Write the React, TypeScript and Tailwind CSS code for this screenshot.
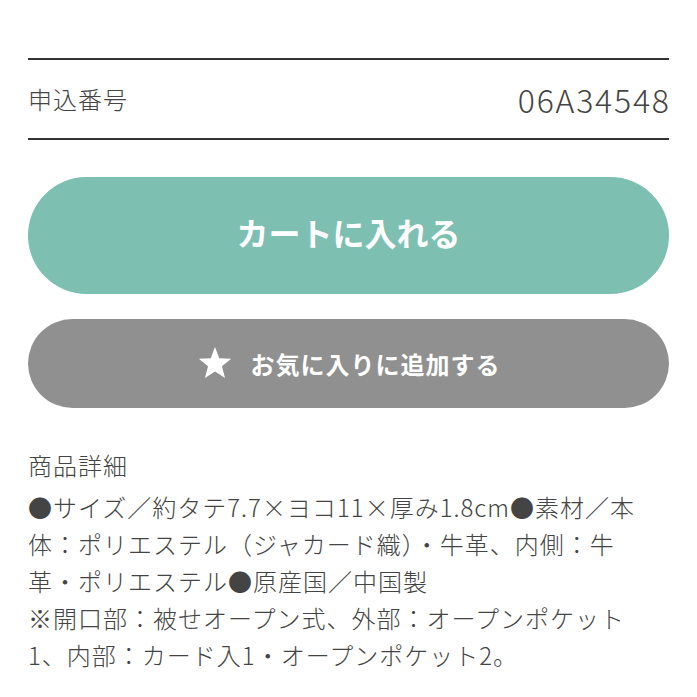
export default function App() {
  const font = { fontFamily: '"Noto Sans CJK JP", "Noto Sans", sans-serif' };
  return (
    <div className="w-[697px] h-[697px] bg-white overflow-hidden px-[28px] text-[#333]" style={font}>
      <div className="h-[58px]" />
      <div className="border-t-2 border-b-2 border-[#333] h-[82px] flex items-center justify-between">
        <span className="text-[24px] tracking-[1px] font-light text-[#444]">申込番号</span>
        <span className="text-[32px] tracking-[1.8px] mr-[-1.8px] font-light text-[#444]">06A34548</span>
      </div>
      <button className="mt-[37px] w-full h-[117px] pb-[8px] rounded-full bg-[#7dbfb1] text-white text-[32px] font-bold flex items-center justify-center">
        カートに入れる
      </button>
      <button className="mt-[25px] w-full h-[89px] rounded-full bg-[#909090] text-white text-[24px] tracking-[1px] font-bold flex items-center justify-center gap-[18px]">
        <svg width="36" height="34" viewBox="0 0 24 23" fill="white">
          <path d="M12 0l2.9 7.6 8.1.4-6.3 5.1 2.1 7.9L12 16.6 5.2 21l2.1-7.9L1 8l8.1-.4z" />
        </svg>
        お気に入りに追加する
      </button>
      <div className="mt-[38px] text-[24px] tracking-[1px] font-light leading-[37px] text-[#444]">
        <div>商品詳細</div>
        <div className="mt-[5px] whitespace-nowrap">
          ●サイズ／約タテ7.7×ヨコ11×厚み1.8cm●素材／本
          <br />
          体：ポリエステル（ジャカード織）・牛革、内側：牛
          <br />
          革・ポリエステル●原産国／中国製
          <br />
          ※開口部：被せオープン式、外部：オープンポケット
          <br />
          1、内部：カード入1・オープンポケット2。
        </div>
      </div>
    </div>
  );
}
